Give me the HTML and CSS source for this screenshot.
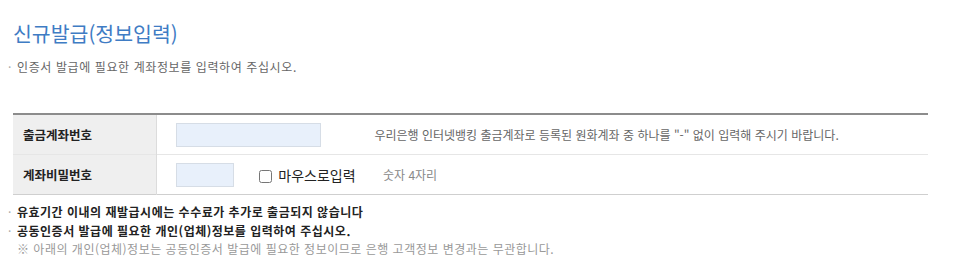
FILE: index.html
```html
<!DOCTYPE html>
<html lang="ko">
<head>
    <meta charset="UTF-8">
    <title>신규발급(정보입력)</title>
    <link rel="stylesheet" href="styles.css">
</head>
<body>

<div class="wrap">
    <h2 class="title">신규발급(정보입력)</h2>
    <p class="desc"><span class="dot">·</span>인증서 발급에 필요한 계좌정보를 입력하여 주십시오.</p>

    <table class="form-table">
        <tr>
            <th>출금계좌번호</th>
            <td>
                <input type="text" class="inp inp-acct">
                <span class="help">우리은행 인터넷뱅킹 출금계좌로 등록된 원화계좌 중 하나를 "-" 없이 입력해 주시기 바랍니다.</span>
            </td>
        </tr>
        <tr>
            <th>계좌비밀번호</th>
            <td>
                <input type="password" class="inp inp-pw">
                <label class="mouse"><input type="checkbox"> 마우스로입력</label>
                <span class="hint">숫자 4자리</span>
            </td>
        </tr>
    </table>

    <ul class="notes">
        <li class="strong"><span class="dot">·</span>유효기간 이내의 재발급시에는 수수료가 추가로 출금되지 않습니다</li>
        <li class="strong"><span class="dot">·</span>공동인증서 발급에 필요한 개인(업체)정보를 입력하여 주십시오.</li>
        <li class="sub">※ 아래의 개인(업체)정보는 공동인증서 발급에 필요한 정보이므로 은행 고객정보 변경과는 무관합니다.</li>
    </ul>
</div>

</body>
</html>
```

FILE: styles.css
```css
body {
    margin: 0;
    font-family: 'Noto Sans CJK KR', 'Noto Sans', sans-serif;
    background: #ffffff;
    color: #333;
}
.wrap {
    padding: 0 38px 0 13px;
}
.title {
    margin: 0;
    padding-top: 18px;
    font-size: 20.5px;
    font-weight: normal;
    line-height: 30px;
    color: #3f7cc4;
}
.desc {
    margin: 11px 0 0 -5px;
    font-size: 12px;
    letter-spacing: 0.6px;
    line-height: 16px;
    color: #666;
}
.dot {
    display: inline-block;
    width: 9px;
    letter-spacing: 0;
    font-weight: normal;
    color: #aaa;
}
.form-table {
    width: 915px;
    margin-top: 38px;
    border-collapse: collapse;
    border-top: 2px solid #8c8c8c;
    border-bottom: 1px solid #cfcfcf;
}
.form-table th {
    width: 133px;
    height: 39px;
    padding: 0 0 0 10px;
    background: #efefef;
    border-right: 1px solid #dcdcdc;
    text-align: left;
    font-size: 12.5px;
    font-weight: bold;
    color: #222;
}
.form-table td {
    padding: 0 0 0 19px;
    font-size: 12px;
}
.form-table tr + tr th,
.form-table tr + tr td {
    border-top: 1px solid #e6e6e6;
}
.inp {
    height: 24px;
    box-sizing: border-box;
    border: 1px solid #d6dde6;
    background: #e8f0fb;
    vertical-align: middle;
    margin: 0;
}
.inp-acct {
    width: 145px;
}
.inp-pw {
    width: 58px;
}
.help {
    margin-left: 50px;
    color: #666;
    vertical-align: middle;
}
.mouse {
    margin-left: 22px;
    font-size: 14px;
    color: #222;
    vertical-align: middle;
}
.mouse input {
    width: 13px;
    height: 13px;
    margin: 0 2px 0 0;
    vertical-align: -2px;
}
.hint {
    margin-left: 24px;
    color: #888;
    vertical-align: middle;
}
.notes {
    list-style: none;
    margin: 8px 0 0 -5px;
    padding: 0;
    font-size: 12px;
    letter-spacing: 0.5px;
    line-height: 18.5px;
}
.notes .strong {
    font-weight: bold;
    color: #222;
}
.notes .sub {
    padding-left: 9px;
    color: #999;
}
```
